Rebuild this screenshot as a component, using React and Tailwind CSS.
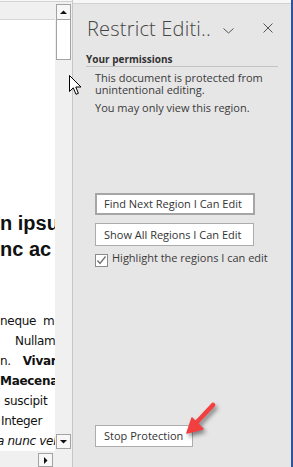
import React from "react";

const BODY_LINES = [
  { key: "l1", pad: "pl-0", node: <span className="whitespace-pre">neque  mauris</span> },
  { key: "l2", pad: "pl-[15px]", node: <span>Nullam</span> },
  {
    key: "l3",
    pad: "pl-0",
    node: (
      <>
        <span>n.</span>
        <b className="ml-[12px]">Vivamus</b>
      </>
    ),
  },
  { key: "l4", pad: "pl-0", node: <b>Maecenas</b> },
  { key: "l5", pad: "pl-[4px]", node: <span>suscipit</span> },
  { key: "l6", pad: "pl-[1px]", node: <span>Integer</span> },
  { key: "l7", pad: "-ml-[3px]", node: <i>a nunc vel</i> },
];

const ScrollBtn = ({ dir, className }) => (
  <div
    className={`flex items-center justify-center border border-[#a3a3a3] bg-[#f7f7f7] ${className}`}
  >
    <svg width="7" height="7" viewBox="0 0 7 7">
      {dir === "up" && <path d="M0 5 L3.5 1.5 L7 5 Z" fill="#111" />}
      {dir === "down" && <path d="M0 2 L3.5 5.5 L7 2 Z" fill="#111" />}
      {dir === "right" && <path d="M2 0 L5.5 3.5 L2 7 Z" fill="#111" />}
    </svg>
  </div>
);

const PanelButton = ({ children, className }) => (
  <button
    className={`ml-[22px] bg-white text-left text-[11px] leading-[18px] text-[#333] ${className}`}
  >
    {children}
  </button>
);

export default function App() {
  return (
    <div className="relative flex h-[467px] w-[293px] overflow-hidden bg-[#f0f0f0]">
      {/* Document side */}
      <div className="flex w-[72px] flex-col">
        <div className="h-[4px] border-b border-[#d2d2d2] bg-[#f7f7f7]" />
        <div className="flex flex-1">
          <div className="flex w-[55px] flex-col">
            <div className="h-[18px] border-b border-[#d6d6d6] bg-[#f0f0f0]" />
            <div className="flex-1 overflow-hidden bg-white text-[#111]">
              <div className="mt-[190px] whitespace-nowrap font-['Liberation_Sans',Arial,sans-serif] text-[20px] font-bold leading-[26px]">
                <div>n ipsum</div>
                <div>nc ac</div>
              </div>
              <div className="mt-[49px] whitespace-nowrap font-['DejaVu_Sans',Verdana,sans-serif] text-[12px] leading-[20px] tracking-[-0.3px]">
                {BODY_LINES.map((l) => (
                  <div key={l.key} className={l.pad}>
                    {l.node}
                  </div>
                ))}
              </div>
            </div>
          </div>
          {/* vertical scrollbar */}
          <div className="flex w-[17px] flex-col bg-[#f0f0f0]">
            <ScrollBtn dir="up" className="ml-[1px] mt-[2px] h-[16px] w-[15px]" />
            <div className="-mt-px ml-[1px] h-[41px] w-[15px] border border-[#a3a3a3] bg-white" />
            <ScrollBtn dir="down" className="mb-[2px] ml-[1px] mt-auto h-[15px] w-[15px]" />
          </div>
        </div>
        {/* horizontal scrollbar */}
        <div className="flex h-[17px] bg-[#f0f0f0]">
          <ScrollBtn dir="right" className="ml-[38px] mt-[2px] h-[14px] w-[15px]" />
        </div>
      </div>

      <div className="w-px bg-[#c6c6c6]" />

      {/* Restrict Editing pane */}
      <div className="flex flex-1 flex-col bg-[#e6e6e6] font-['Open_Sans',sans-serif] text-[#3a3a3a]">
        <div className="h-[4px] border-b border-[#d2d2d2] bg-[#f7f7f7]" />

        <div className="mt-[13px] flex h-[24px] items-start">
          <span className="ml-[14px] whitespace-nowrap text-[20px] font-light leading-[24px] tracking-[0.2px] text-[#444]">
            Restrict Editi..
          </span>
          <svg className="ml-auto mt-[11px]" width="11" height="6" viewBox="0 0 11 6">
            <path d="M0.5 0.5 L5.5 5 L10.5 0.5" fill="none" stroke="#555" strokeWidth="1" />
          </svg>
          <svg className="ml-[29px] mr-[18px] mt-[6px]" width="10" height="10" viewBox="0 0 10 10">
            <path d="M0.5 0.5 L9.5 9.5 M9.5 0.5 L0.5 9.5" fill="none" stroke="#555" strokeWidth="1" />
          </svg>
        </div>

        <div className="mx-[13px] mt-[11px] border-b border-[#c4c4c4] text-[10px] font-bold leading-[14px] text-[#333]">
          Your permissions
        </div>

        <p className="ml-[22px] mt-[5px] text-[11px] leading-[12px]">
          This document is protected from
          <br />
          unintentional editing.
        </p>
        <p className="ml-[22px] mt-[6px] text-[11px] leading-[12px]">
          You may only view this region.
        </p>

        <PanelButton className="mt-[79px] h-[22px] w-[160px] border-2 border-[#a6a6a6] pl-[7px]">
          Find Next Region I Can Edit
        </PanelButton>
        <PanelButton className="mt-[8px] h-[23px] w-[159px] border border-[#acacac] pl-[8px]">
          Show All Regions I Can Edit
        </PanelButton>

        <label className="ml-[22px] mt-[6px] flex items-start">
          <span className="mt-[2px] flex h-[13px] w-[13px] items-center justify-center border border-[#8a8a8a] bg-white">
            <svg width="11" height="11" viewBox="0 0 11 11">
              <path d="M1.5 5.5 L4 8.5 L9.5 1.5" fill="none" stroke="#6f6f6f" strokeWidth="1.3" />
            </svg>
          </span>
          <span className="ml-[4px] whitespace-nowrap text-[11px] leading-[12px]">
            Highlight the regions I can edit
          </span>
        </label>

        <PanelButton className="mb-[20px] mt-auto h-[22px] w-[98px] border border-[#adadad] pl-[8px]">
          Stop Protection
        </PanelButton>
      </div>

      <div className="w-[2px] bg-[#2b579a]" />

      {/* mouse pointer */}
      <svg className="absolute left-[69px] top-[75px]" width="14" height="21" viewBox="0 0 14 21">
        <path
          d="M0.5 0.5 L0.5 16.5 L4.3 12.8 L7 19.3 L9.4 18.3 L6.8 12 L12 12 Z"
          fill="#fff"
          stroke="#000"
          strokeWidth="1"
          strokeLinejoin="miter"
        />
      </svg>

      {/* red annotation arrow */}
      <svg
        className="absolute left-[180px] top-[398px] drop-shadow-[2px_3px_2px_rgba(0,0,0,0.45)]"
        width="40"
        height="42"
        viewBox="0 0 40 42"
      >
        <path d="M33 7 L17 24" stroke="#f23f3f" strokeWidth="4.5" strokeLinecap="round" />
        <path d="M7 35 L12 20 L23 31 Z" fill="#f23f3f" stroke="#f23f3f" strokeWidth="1.5" strokeLinejoin="round" />
      </svg>
    </div>
  );
}
